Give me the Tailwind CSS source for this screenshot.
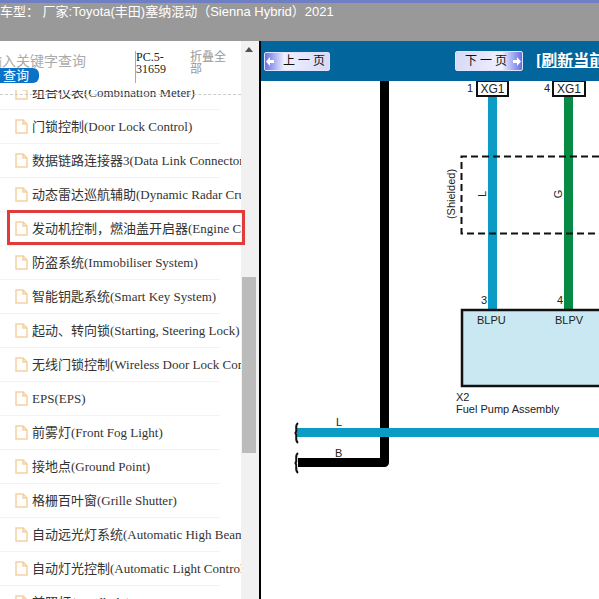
<!DOCTYPE html>
<html lang="zh">
<head>
  <meta charset="UTF-8" />
  <title>电路图</title>
  <script src="https://cdn.jsdelivr.net/npm/@tailwindcss/browser@4"></script>
</head>
<body class="h-[599px] w-[599px] overflow-hidden bg-white font-['Liberation_Sans','Noto_Sans_CJK_SC',sans-serif]">

  <!-- 顶部车型 -->
  <header class="h-[41px] border-t-[3px] border-[#6f7fc4] bg-[#999999] text-[13px] leading-[17px] text-white whitespace-nowrap">
    <p>车型： 厂家:Toyota(丰田)塞纳混动（Sienna Hybrid）2021</p>
  </header>

  <div class="relative flex h-[558px]">

    <!-- 左侧目录 -->
    <aside class="flex w-[259px] shrink-0">
      <div class="relative w-[241px] overflow-hidden">
        <div class="relative z-10 h-[49px] bg-white">
          <div class="absolute left-[-12px] top-[12px] whitespace-nowrap text-[14px] leading-[17px] text-[#aaaaaa]">输入关键字查询</div>
          <div class="absolute left-[-12px] top-[27px] h-[15px] w-[51px] rounded-r-[6px] bg-[#0b72c8] pl-[15px] text-[13px] leading-[15px] text-white">查询</div>
          <div class="absolute left-[135px] top-[10px] h-[32px] w-[42px] border-l border-[#aaaaaa] font-['Liberation_Serif',serif] text-[12px] leading-[12px] text-[#222222]">PC.5-31659</div>
          <div class="absolute left-[190px] top-[10px] w-[37px] text-[12px] leading-[12px] text-[#999999]">折叠全部</div>
        </div>
        <div class="absolute left-0 top-[53px] z-20 w-full border-t border-dashed border-[#cccccc]"></div>
        <ul class="-mt-[14px] font-['Liberation_Serif','Noto_Sans_CJK_SC',serif] text-[13px] leading-[33px] text-[#333333] whitespace-nowrap">
          <li class="flex h-[34px] w-[220px] items-center border-b border-[#f3f3f3] pl-[15px]">
            <svg class="mr-[4px] h-[15px] w-[13px] shrink-0" viewBox="0 0 13 15" fill="none" stroke="#f6cfa0" stroke-width="1.5"><path d="M1 1h7L12 5V14H1zM8 1v4H12"/></svg>组合仪表(Combination Meter)
          </li>
          <li class="flex h-[34px] w-[220px] items-center border-b border-[#f3f3f3] pl-[15px]">
            <svg class="mr-[4px] h-[15px] w-[13px] shrink-0" viewBox="0 0 13 15" fill="none" stroke="#f6cfa0" stroke-width="1.5"><path d="M1 1h7L12 5V14H1zM8 1v4H12"/></svg>门锁控制(Door Lock Control)
          </li>
          <li class="flex h-[34px] w-[220px] items-center border-b border-[#f3f3f3] pl-[15px]">
            <svg class="mr-[4px] h-[15px] w-[13px] shrink-0" viewBox="0 0 13 15" fill="none" stroke="#f6cfa0" stroke-width="1.5"><path d="M1 1h7L12 5V14H1zM8 1v4H12"/></svg>数据链路连接器3(Data Link Connector 3)
          </li>
          <li class="flex h-[34px] w-[220px] items-center border-b border-[#f3f3f3] pl-[15px]">
            <svg class="mr-[4px] h-[15px] w-[13px] shrink-0" viewBox="0 0 13 15" fill="none" stroke="#f6cfa0" stroke-width="1.5"><path d="M1 1h7L12 5V14H1zM8 1v4H12"/></svg>动态雷达巡航辅助(Dynamic Radar Cruise Control)
          </li>
          <li class="flex h-[34px] w-[220px] items-center border-b border-[#f3f3f3] pl-[15px]">
            <svg class="mr-[4px] h-[15px] w-[13px] shrink-0" viewBox="0 0 13 15" fill="none" stroke="#f6cfa0" stroke-width="1.5"><path d="M1 1h7L12 5V14H1zM8 1v4H12"/></svg>发动机控制，燃油盖开启器(Engine Control)
          </li>
          <li class="flex h-[34px] w-[220px] items-center border-b border-[#f3f3f3] pl-[15px]">
            <svg class="mr-[4px] h-[15px] w-[13px] shrink-0" viewBox="0 0 13 15" fill="none" stroke="#f6cfa0" stroke-width="1.5"><path d="M1 1h7L12 5V14H1zM8 1v4H12"/></svg>防盗系统(Immobiliser System)
          </li>
          <li class="flex h-[34px] w-[220px] items-center border-b border-[#f3f3f3] pl-[15px]">
            <svg class="mr-[4px] h-[15px] w-[13px] shrink-0" viewBox="0 0 13 15" fill="none" stroke="#f6cfa0" stroke-width="1.5"><path d="M1 1h7L12 5V14H1zM8 1v4H12"/></svg>智能钥匙系统(Smart Key System)
          </li>
          <li class="flex h-[34px] w-[220px] items-center border-b border-[#f3f3f3] pl-[15px]">
            <svg class="mr-[4px] h-[15px] w-[13px] shrink-0" viewBox="0 0 13 15" fill="none" stroke="#f6cfa0" stroke-width="1.5"><path d="M1 1h7L12 5V14H1zM8 1v4H12"/></svg>起动、转向锁(Starting, Steering Lock)
          </li>
          <li class="flex h-[34px] w-[220px] items-center border-b border-[#f3f3f3] pl-[15px]">
            <svg class="mr-[4px] h-[15px] w-[13px] shrink-0" viewBox="0 0 13 15" fill="none" stroke="#f6cfa0" stroke-width="1.5"><path d="M1 1h7L12 5V14H1zM8 1v4H12"/></svg>无线门锁控制(Wireless Door Lock Control)
          </li>
          <li class="flex h-[34px] w-[220px] items-center border-b border-[#f3f3f3] pl-[15px]">
            <svg class="mr-[4px] h-[15px] w-[13px] shrink-0" viewBox="0 0 13 15" fill="none" stroke="#f6cfa0" stroke-width="1.5"><path d="M1 1h7L12 5V14H1zM8 1v4H12"/></svg>EPS(EPS)
          </li>
          <li class="flex h-[34px] w-[220px] items-center border-b border-[#f3f3f3] pl-[15px]">
            <svg class="mr-[4px] h-[15px] w-[13px] shrink-0" viewBox="0 0 13 15" fill="none" stroke="#f6cfa0" stroke-width="1.5"><path d="M1 1h7L12 5V14H1zM8 1v4H12"/></svg>前雾灯(Front Fog Light)
          </li>
          <li class="flex h-[34px] w-[220px] items-center border-b border-[#f3f3f3] pl-[15px]">
            <svg class="mr-[4px] h-[15px] w-[13px] shrink-0" viewBox="0 0 13 15" fill="none" stroke="#f6cfa0" stroke-width="1.5"><path d="M1 1h7L12 5V14H1zM8 1v4H12"/></svg>接地点(Ground Point)
          </li>
          <li class="flex h-[34px] w-[220px] items-center border-b border-[#f3f3f3] pl-[15px]">
            <svg class="mr-[4px] h-[15px] w-[13px] shrink-0" viewBox="0 0 13 15" fill="none" stroke="#f6cfa0" stroke-width="1.5"><path d="M1 1h7L12 5V14H1zM8 1v4H12"/></svg>格栅百叶窗(Grille Shutter)
          </li>
          <li class="flex h-[34px] w-[220px] items-center border-b border-[#f3f3f3] pl-[15px]">
            <svg class="mr-[4px] h-[15px] w-[13px] shrink-0" viewBox="0 0 13 15" fill="none" stroke="#f6cfa0" stroke-width="1.5"><path d="M1 1h7L12 5V14H1zM8 1v4H12"/></svg>自动远光灯系统(Automatic High Beam)
          </li>
          <li class="flex h-[34px] w-[220px] items-center border-b border-[#f3f3f3] pl-[15px]">
            <svg class="mr-[4px] h-[15px] w-[13px] shrink-0" viewBox="0 0 13 15" fill="none" stroke="#f6cfa0" stroke-width="1.5"><path d="M1 1h7L12 5V14H1zM8 1v4H12"/></svg>自动灯光控制(Automatic Light Control)
          </li>
          <li class="flex h-[34px] w-[220px] items-center border-b border-[#f3f3f3] pl-[15px]">
            <svg class="mr-[4px] h-[15px] w-[13px] shrink-0" viewBox="0 0 13 15" fill="none" stroke="#f6cfa0" stroke-width="1.5"><path d="M1 1h7L12 5V14H1zM8 1v4H12"/></svg>前照灯(Headlight)
          </li>
        </ul>
      </div>
      <!-- 滚动条 -->
      <div class="w-[18px] bg-[#f1f1f1] pl-px pr-[3px]">
        <div class="mx-auto mt-[6px] h-0 w-0 border-x-[4px] border-b-[5px] border-x-transparent border-b-[#505050]"></div>
        <div class="mt-[225px] h-[176px] w-[14px] bg-[#bbbbbb]"></div>
      </div>
    </aside>

    <!-- 红色标记框 -->
    <div class="absolute left-[7px] top-[169px] h-[35px] w-[238px] border-[3px] border-[#e03c3c]"></div>

    <!-- 右侧电路图 -->
    <main class="flex-1 border-l-[2px] border-black">
      <div class="flex h-[40px] items-center bg-[#02659c] pl-[3px] whitespace-nowrap">
        <div class="flex h-[19px] w-[66px] items-center rounded-[2px] border border-[#dfe3ff] bg-gradient-to-r from-[#6c6fe0] via-[#f0f0ff] via-30% to-[#d8daf6] text-[12px] text-[#111111]">
          <svg class="ml-px h-[9px] w-[8px] shrink-0" viewBox="0 0 8 9" fill="#ffffff"><path d="M0 4.500 4 0V3H8V6H4V9z"/></svg>
          <span class="ml-[9px] tracking-[3px]">上一页</span>
        </div>
        <div class="ml-[125px] flex h-[20px] w-[68px] items-center rounded-[2px] border border-[#dfe3ff] bg-gradient-to-r from-[#d8daf6] via-[#f0f0ff] via-70% to-[#6c6fe0] text-[12px] text-[#111111]">
          <span class="ml-[9px] tracking-[3px]">下一页</span>
          <svg class="ml-auto mr-px h-[9px] w-[8px] shrink-0" viewBox="0 0 8 9" fill="#ffffff"><path d="M8 4.500 4 0V3H0V6H4V9z"/></svg>
        </div>
        <a class="ml-[13px] font-['Liberation_Serif','Noto_Sans_CJK_SC',serif] text-[16px] font-bold text-white underline">[刷新当前页]</a>
      </div>
      <svg class="block" width="338" height="518" viewBox="261 81 338 518" font-family="Liberation Sans, sans-serif" fill="#222222">
        <!-- 地线 -->
        <path d="M384.5 81V462.5H298" fill="none" stroke="#000000" stroke-width="9" stroke-linejoin="round"/>
        <!-- 导线 -->
        <rect x="488" y="96" width="9" height="214" fill="#0a9cc4"/>
        <rect x="564" y="96" width="9" height="214" fill="#068a44"/>
        <rect x="297" y="428" width="302" height="9" fill="#0a9cc4"/>
        <!-- 屏蔽 -->
        <path d="M610 156.500H461.500V233.500H610" fill="none" stroke="#111111" stroke-width="2" stroke-dasharray="7 4"/>
        <text transform="translate(455 194) rotate(-90)" font-size="11" text-anchor="middle">(Shielded)</text>
        <text transform="translate(486 194) rotate(-90)" font-size="11" text-anchor="middle">L</text>
        <text transform="translate(562 194) rotate(-90)" font-size="11" text-anchor="middle">G</text>
        <!-- 接头 -->
        <rect x="477" y="81" width="31" height="15" fill="#ffffff" stroke="#111111" stroke-width="2"/>
        <rect x="553" y="81" width="32" height="15" fill="#ffffff" stroke="#111111" stroke-width="2"/>
        <text x="492.500" y="93" font-size="12" text-anchor="middle">XG1</text>
        <text x="569" y="93" font-size="12" text-anchor="middle">XG1</text>
        <text x="467" y="92" font-size="11">1</text>
        <text x="544" y="92" font-size="11">4</text>
        <text x="481" y="304" font-size="11">3</text>
        <text x="557" y="304" font-size="11">4</text>
        <!-- 油泵 -->
        <rect x="462" y="310" width="150" height="76" fill="#c9e8f1" stroke="#111111" stroke-width="2.500"/>
        <text x="477" y="324" font-size="11">BLPU</text>
        <text x="555" y="324" font-size="11">BLPV</text>
        <text x="456" y="401" font-size="11">X2</text>
        <text x="456" y="413" font-size="11">Fuel Pump Assembly</text>
        <text x="336" y="426" font-size="11">L</text>
        <text x="335" y="457" font-size="11">B</text>
        <!-- 断线符号 -->
        <path d="M298 423C294 426 298 430 295.500 433C298 436 294 440 298 443" fill="none" stroke="#111111" stroke-width="2"/>
        <path d="M298 453C294 456 298 460 295.500 463C298 466 294 470 298 473" fill="none" stroke="#111111" stroke-width="2"/>
      </svg>
    </main>
  </div>
</body>
</html>
